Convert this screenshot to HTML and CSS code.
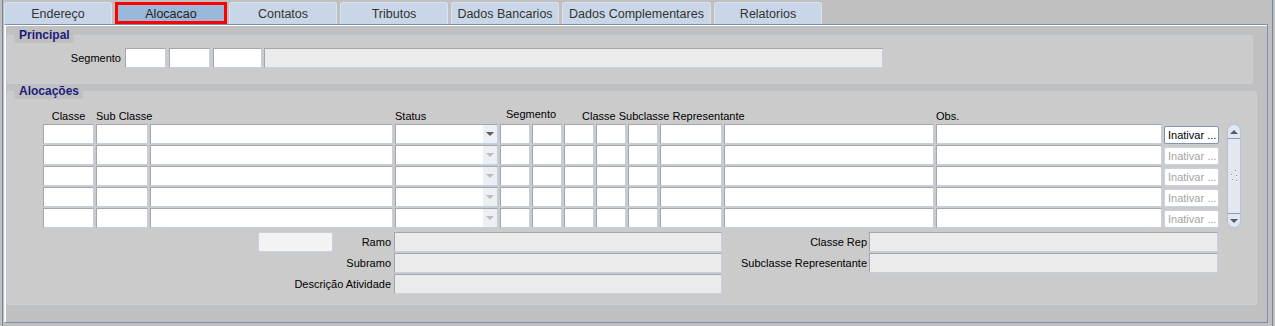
FILE: index.html
```html
<!DOCTYPE html>
<html lang="pt">
<head>
  <meta charset="UTF-8">
  <title>Alocacao</title>
  <link rel="stylesheet" href="styles.css">
</head>
<body>
  <div class="frame">

    <div class="tabs">
      <div class="tab">Endereço</div>
      <div class="tab active">Alocacao</div>
      <div class="tab">Contatos</div>
      <div class="tab">Tributos</div>
      <div class="tab">Dados Bancarios</div>
      <div class="tab wide">Dados Complementares</div>
      <div class="tab">Relatorios</div>
    </div>

    <div class="panel">

      <fieldset class="group group-principal">
        <legend>Principal</legend>
        <div class="seg-row">
          <label class="seg-label">Segmento</label>
          <input type="text" class="field w41">
          <input type="text" class="field w41">
          <input type="text" class="field w49">
          <input type="text" class="field ro w619" readonly>
        </div>
      </fieldset>

      <fieldset class="group group-alocacoes">
        <legend>Alocações</legend>

        <div class="cols grid-head">
          <div class="head center c1">Classe</div>
          <div class="head center c2">Sub Classe</div>
          <div class="head c4">Status</div>
          <div class="head center up c5">Segmento</div>
          <div class="head c7 pad">Classe Subclasse Representante</div>
          <div class="head c12">Obs.</div>
        </div>

        <div class="cols grid-rows">
          <!-- linha 1 -->
          <input type="text" class="field">
          <input type="text" class="field">
          <input type="text" class="field">
          <div class="field select"><span class="arrow"><svg width="8" height="4"><path d="M0 0H8L4 4Z" fill="#5c5c5c"/></svg></span></div>
          <input type="text" class="field">
          <input type="text" class="field">
          <input type="text" class="field">
          <input type="text" class="field">
          <input type="text" class="field">
          <input type="text" class="field">
          <input type="text" class="field">
          <input type="text" class="field">
          <button class="btn">Inativar ...</button>

          <div class="scrollbar">
            <div class="sb-btn sb-up"><svg width="8" height="4"><path d="M0 4H8L4 0Z" fill="#4f5d72"/></svg></div>
            <div class="sb-track">
              <svg width="8" height="16">
                <path d="M5 3L6 2M1 7L2 6M6 8L7 7M2 12L3 11M6 13L7 12" stroke="#7f8ca2" stroke-width="1"/>
                <path d="M5 4L6 3M1 8L2 7M6 9L7 8M2 13L3 12M6 14L7 13" stroke="#ffffff" stroke-width="1"/>
              </svg>
            </div>
            <div class="sb-btn sb-down"><svg width="8" height="4"><path d="M0 0H8L4 4Z" fill="#4f5d72"/></svg></div>
          </div>

          <!-- linha 2 -->
          <input type="text" class="field">
          <input type="text" class="field">
          <input type="text" class="field">
          <div class="field select"><span class="arrow"><svg width="8" height="4"><path d="M0 0H8L4 4Z" fill="#bcbcbc"/></svg></span></div>
          <input type="text" class="field">
          <input type="text" class="field">
          <input type="text" class="field">
          <input type="text" class="field">
          <input type="text" class="field">
          <input type="text" class="field">
          <input type="text" class="field">
          <input type="text" class="field">
          <button class="btn" disabled>Inativar ...</button>

          <!-- linha 3 -->
          <input type="text" class="field">
          <input type="text" class="field">
          <input type="text" class="field">
          <div class="field select"><span class="arrow"><svg width="8" height="4"><path d="M0 0H8L4 4Z" fill="#bcbcbc"/></svg></span></div>
          <input type="text" class="field">
          <input type="text" class="field">
          <input type="text" class="field">
          <input type="text" class="field">
          <input type="text" class="field">
          <input type="text" class="field">
          <input type="text" class="field">
          <input type="text" class="field">
          <button class="btn" disabled>Inativar ...</button>

          <!-- linha 4 -->
          <input type="text" class="field">
          <input type="text" class="field">
          <input type="text" class="field">
          <div class="field select"><span class="arrow"><svg width="8" height="4"><path d="M0 0H8L4 4Z" fill="#bcbcbc"/></svg></span></div>
          <input type="text" class="field">
          <input type="text" class="field">
          <input type="text" class="field">
          <input type="text" class="field">
          <input type="text" class="field">
          <input type="text" class="field">
          <input type="text" class="field">
          <input type="text" class="field">
          <button class="btn" disabled>Inativar ...</button>

          <!-- linha 5 -->
          <input type="text" class="field">
          <input type="text" class="field">
          <input type="text" class="field">
          <div class="field select"><span class="arrow"><svg width="8" height="4"><path d="M0 0H8L4 4Z" fill="#bcbcbc"/></svg></span></div>
          <input type="text" class="field">
          <input type="text" class="field">
          <input type="text" class="field">
          <input type="text" class="field">
          <input type="text" class="field">
          <input type="text" class="field">
          <input type="text" class="field">
          <input type="text" class="field">
          <button class="btn" disabled>Inativar ...</button>
        </div>

        <div class="detail">
          <input type="text" class="field soft d-small">
          <label class="d-label d-c3">Ramo</label>
          <input type="text" class="field ro d-c4" readonly>
          <label class="d-label d-c5">Classe Rep</label>
          <input type="text" class="field ro d-c6" readonly>

          <label class="d-label d-wide">Subramo</label>
          <input type="text" class="field ro d-c4" readonly>
          <label class="d-label d-c5">Subclasse Representante</label>
          <input type="text" class="field ro d-c6" readonly>

          <label class="d-label d-wide">Descrição Atividade</label>
          <input type="text" class="field ro d-c4" readonly>
        </div>
      </fieldset>

    </div>
  </div>
</body>
</html>
```

FILE: styles.css
```css
* {
  box-sizing: border-box;
}

body {
  margin: 0;
  background: #c0c0c0;
  font-family: "Liberation Sans", Arial, sans-serif;
  font-size: 11px;
  color: #000;
}

.frame {
  height: 326px;
  margin: 0 2px;
  padding: 2px 1px 0;
  border-left: 1px solid #72849f;
  border-right: 1px solid #72849f;
}

/* abas */
.tabs {
  display: flex;
  gap: 3px;
  height: 22px;
}
.tab {
  width: 108px;
  height: 22px;
  padding-top: 2px;
  background: #c9d6e8;
  border: 1px solid #d9e2ee;
  border-bottom: none;
  border-radius: 3px 3px 0 0;
  color: #333;
  font-size: 12.5px;
  line-height: 18px;
  text-align: center;
  white-space: nowrap;
}
.tab.wide {
  width: 149px;
}
.tab.active {
  width: 112px;
  margin-right: -1px;
  padding-top: 1px;
  line-height: 16px;
  background: #9ab8d9;
  border: 3px solid #ff0000;
  border-radius: 0;
  color: #222;
}

.panel {
  height: 299px;
  margin-right: 3px;
  border: 1px solid #7b8fae;
  border-left-color: #eef2f8;
  background: #c0c0c0;
  box-shadow: inset 1px 1px 0 #ffffff;
}

/* grupos */
.group {
  margin: 0;
  padding: 0;
  min-inline-size: 0;
  background: #cbcbcb;
  border: 1px solid #c4d0e1;
  border-radius: 3px;
}
.group legend {
  margin-left: 6px;
  padding: 0 4px 0 5px;
  background: #c0c0c0;
  color: #1c1c7a;
  font-size: 12px;
  font-weight: bold;
  line-height: 15px;
}
.group-principal {
  margin: 3px 14px 0 2px;
  padding: 5px 0 15px;
}
.group-alocacoes {
  margin: 0 10px 0 2px;
  padding: 11px 0 10px;
}

/* campos */
.field {
  height: 20px;
  margin: 0;
  padding: 0 2px;
  background: #fff;
  border: 1px solid;
  border-color: #a2a7ae #c3d0e2 #c3d0e2 #a2a7ae;
  font: inherit;
  outline: none;
}
.field.ro {
  background: #ebebeb;
}
.field.soft {
  background: #f3f3f3;
  border-color: #c6d2e3;
  border-radius: 2px;
}

.seg-row {
  display: flex;
  align-items: center;
}
.seg-label {
  width: 117px;
  padding-right: 4px;
  text-align: right;
  line-height: 20px;
}
.seg-row .field + .field {
  margin-left: 3px;
}
.seg-row .w41 { width: 41px; }
.seg-row .w49 { width: 49px; }
.seg-row .w619 { width: 619px; margin-left: 2px !important; }

/* grade de alocacoes */
.cols {
  display: grid;
  grid-template-columns: 51px 52px 243px 103px 30px 30px 30px 30px 30px 62px 210px 226px 55px 20px;
  column-gap: 2px;
  padding-left: 35px;
}
.grid-head {
  height: 14px;
}
.grid-rows {
  grid-template-rows: repeat(5, 20px);
  row-gap: 1px;
}
.grid-rows .field {
  width: 100%;
}
.head {
  line-height: 13px;
  white-space: nowrap;
}
.head.center { text-align: center; }
.head.up { line-height: 9px; align-self: start; }
.head.pad { padding-left: 18px; }
.c1 { grid-column: 1; }
.c2 { grid-column: 2; }
.c4 { grid-column: 4; }
.c5 { grid-column: 5 / 7; }
.c7 { grid-column: 7 / 12; }
.c12 { grid-column: 12; }

.select {
  display: flex;
  justify-content: flex-end;
  padding: 0;
}
.select .arrow {
  width: 14px;
  display: flex;
  align-items: center;
  justify-content: center;
  background: #eceff4;
}

.btn {
  align-self: end;
  height: 18px;
  padding: 0 3px;
  background: #fff;
  border: 1px solid #8194b3;
  border-radius: 2px;
  font: inherit;
  color: #000;
  text-align: left;
  white-space: nowrap;
  overflow: hidden;
}
.btn:disabled {
  border-color: #c7d2e2;
  color: #a3a3a3;
}

.scrollbar {
  grid-column: 14;
  grid-row: 1 / 6;
  justify-self: end;
  width: 14px;
  display: flex;
  flex-direction: column;
  background: #e3e8f0;
  border: 1px solid #b4c1d4;
  border-radius: 7px;
}
.sb-btn {
  height: 14px;
  display: flex;
  align-items: center;
  justify-content: center;
}
.sb-up {
  border-bottom: 1px solid #8e9bb0;
}
.sb-down {
  border-top: 1px solid #8e9bb0;
}
.sb-track {
  flex: 1;
  display: flex;
  align-items: center;
  justify-content: center;
}

/* detalhes */
.detail {
  display: grid;
  grid-template-columns: 250px 75px 61px 328px 147px 349px;
  grid-template-rows: repeat(3, 20px);
  row-gap: 1px;
  margin-top: 4px;
}
.d-label {
  line-height: 20px;
  text-align: right;
  white-space: nowrap;
}
.d-small { grid-column: 2; width: 100%; }
.d-c3 { grid-column: 3; padding-right: 3px; }
.d-wide { grid-column: 1 / 4; padding-right: 3px; }
.d-c4 { grid-column: 4; width: 100%; }
.d-c5 { grid-column: 5; padding-right: 2px; }
.d-c6 { grid-column: 6; width: 100%; }
```
